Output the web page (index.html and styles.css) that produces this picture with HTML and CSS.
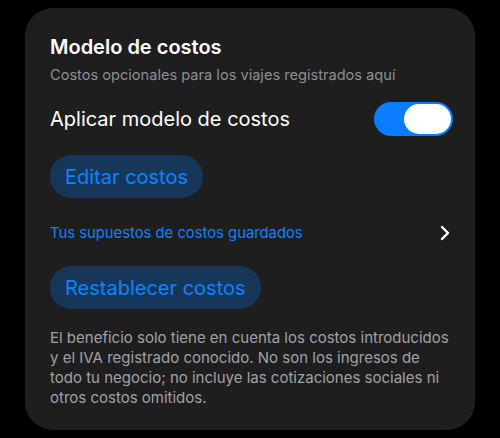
FILE: index.html
```html
<html>
<head>
<meta charset="UTF-8">
<meta name="viewport" content="width=device-width, initial-scale=1.0">
<title>Modelo de costos</title>
<link rel="stylesheet" href="styles.css">
</head>
<body>
    <div class="card">
        <h2 class="title">Modelo de costos</h2>
        <p class="subtitle">Costos opcionales para los viajes registrados aquí</p>
        <div class="toggle-row">
            <span class="toggle-label">Aplicar modelo de costos</span>
            <label class="toggle">
                <input type="checkbox" checked>
                <span class="slider"></span>
            </label>
        </div>
        <button class="btn">Editar costos</button>
        <a class="link-row" href="#">
            <span>Tus supuestos de costos guardados</span>
            <svg class="chevron" viewBox="0 0 10 16" xmlns="http://www.w3.org/2000/svg">
                <polyline points="2,2 8,8 2,14" fill="none" stroke="#ffffff" stroke-width="2.4" stroke-linecap="round" stroke-linejoin="round"/>
            </svg>
        </a>
        <button class="btn">Restablecer costos</button>
        <p class="note">El beneficio solo tiene en cuenta los costos introducidos y el IVA registrado conocido. No son los ingresos de todo tu negocio; no incluye las cotizaciones sociales ni otros costos omitidos.</p>
    </div>
</body>
</html>
```

FILE: styles.css
```css
body {
    background-color: #000000;
    color: #ffffff;
    font-family: Inter, "Noto Sans", sans-serif;
    margin: 0;
    padding: 8px 25px;
}
.card {
    background-color: #1e1e1f;
    border-radius: 28px;
    height: 422px;
    box-sizing: border-box;
    padding: 26px 22px 0 25px;
}
.title {
    font-size: 20px;
    font-weight: 600;
    margin: 0;
    line-height: 26px;
}
.subtitle {
    font-size: 14.6px;
    color: #8e8e93;
    margin: 6px 0 0;
    line-height: 18px;
}
.toggle-row {
    display: flex;
    justify-content: space-between;
    align-items: center;
    margin-top: 18px;
}
.toggle-label {
    font-size: 20px;
}
.toggle {
    position: relative;
    display: inline-block;
    width: 79px;
    height: 34px;
}
.toggle input {
    opacity: 0;
    width: 0;
    height: 0;
}
.slider {
    position: absolute;
    top: 0;
    left: 0;
    right: 0;
    bottom: 0;
    background-color: #0a7cff;
    border-radius: 17px;
}
.slider:before {
    position: absolute;
    content: "";
    height: 30px;
    width: 47px;
    right: 2px;
    top: 2px;
    background-color: #ffffff;
    border-radius: 15px;
}
.btn {
    display: block;
    background-color: #16375a;
    color: #0a84ff;
    border: none;
    border-radius: 22px;
    padding: 0 15px;
    height: 43px;
    font-family: inherit;
    font-size: 20px;
    margin-top: 19px;
}
.link-row {
    display: flex;
    justify-content: space-between;
    align-items: center;
    color: #0a84ff;
    text-decoration: none;
    font-size: 14.8px;
    margin: 26px 0 24px;
}
.chevron {
    width: 10px;
    height: 16px;
    margin-right: 3px;
}
.note {
    font-size: 15px;
    line-height: 20px;
    color: #a1a1a6;
    margin: 19px 0 0;
}
```
